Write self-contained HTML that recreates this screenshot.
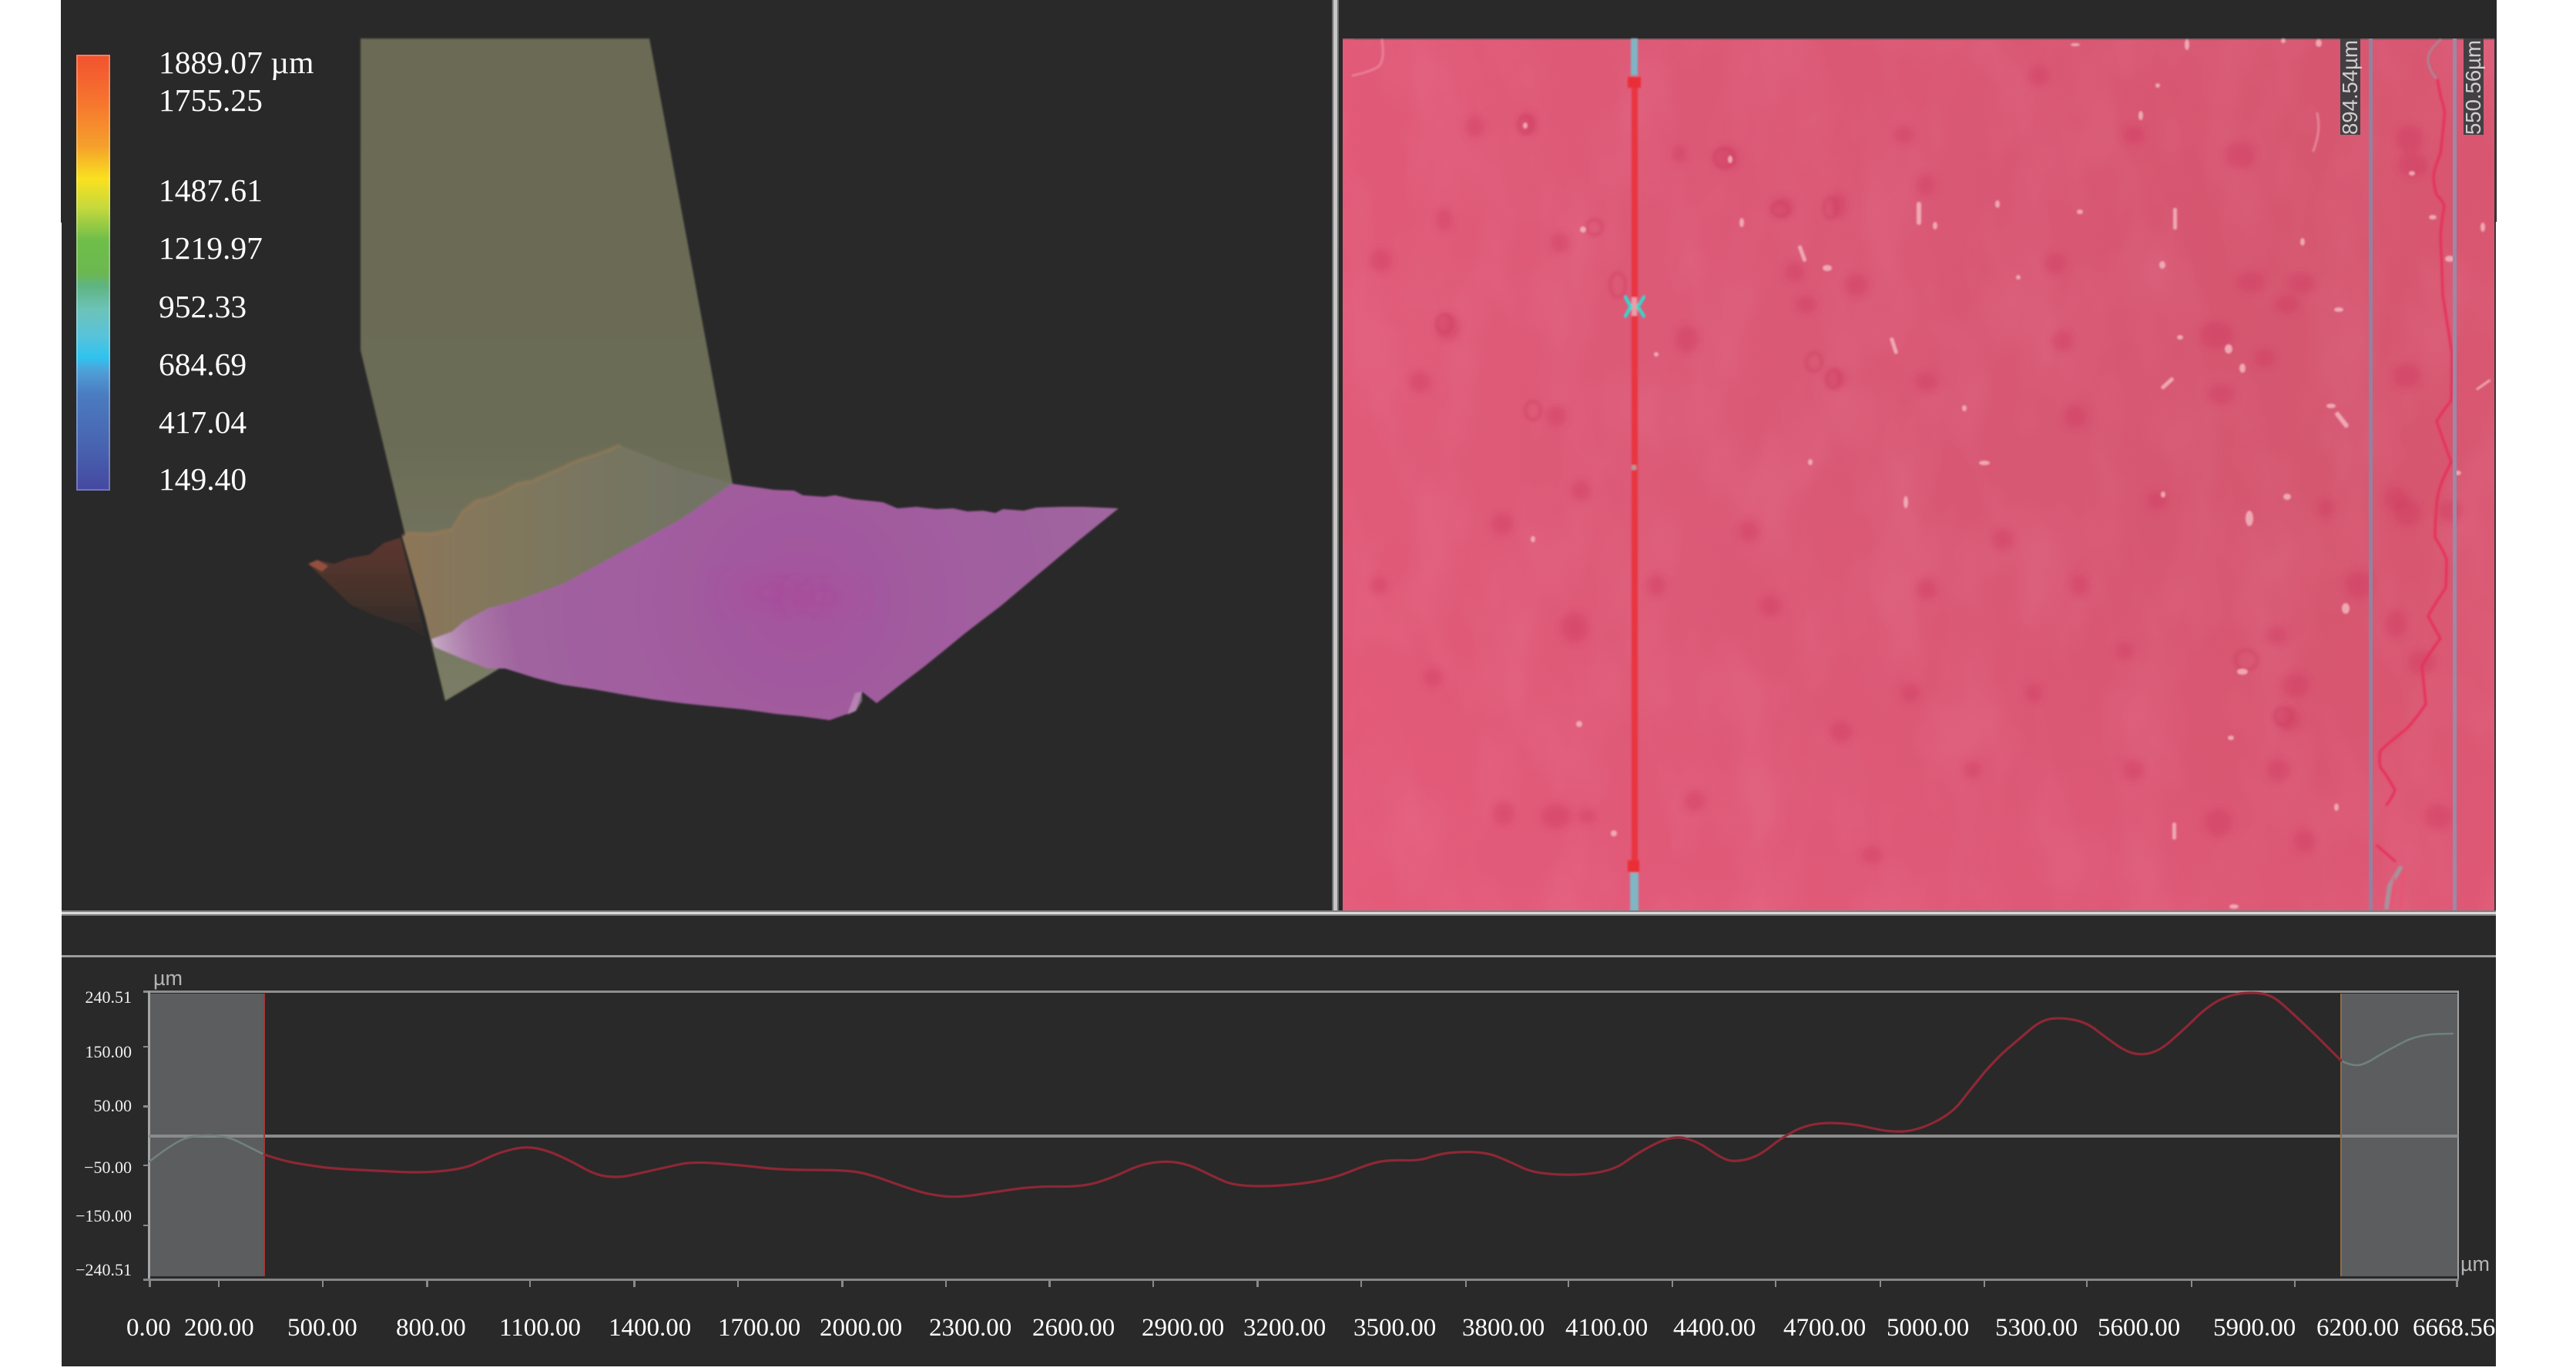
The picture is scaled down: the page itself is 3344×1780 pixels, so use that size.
<!DOCTYPE html>
<html lang="en">
<head>
<meta charset="utf-8">
<title>Surface profile</title>
<style>
html,body{margin:0;padding:0;background:#fff;width:3344px;height:1780px;overflow:hidden}
svg{display:block}
text{font-family:"Liberation Serif",serif;fill:#fff}
.s{font-family:"Liberation Sans",sans-serif}
.leg{font-size:41.5px}
.yl{font-size:22px;text-anchor:end;fill:#f0f0f0}
.xl{font-size:33px}
</style>
</head>
<body>
<svg width="3344" height="1780" viewBox="0 0 3344 1780" xmlns="http://www.w3.org/2000/svg">
<defs>
<linearGradient id="bar" x1="0" y1="0" x2="0" y2="1">
<stop offset="0" stop-color="#f2522f"/><stop offset=".11" stop-color="#f6752f"/><stop offset=".21" stop-color="#f5a02b"/><stop offset=".285" stop-color="#f9e11f"/><stop offset=".35" stop-color="#c6d93c"/><stop offset=".425" stop-color="#6fbe4a"/><stop offset=".5" stop-color="#6cb850"/><stop offset=".53" stop-color="#5fb482"/><stop offset=".585" stop-color="#6cc3b8"/><stop offset=".647" stop-color="#57c3dc"/><stop offset=".694" stop-color="#2fc3ee"/><stop offset=".726" stop-color="#4f9fd8"/><stop offset=".78" stop-color="#4a7cc0"/><stop offset=".9" stop-color="#4863b0"/><stop offset="1" stop-color="#4548a0"/>
</linearGradient>
<linearGradient id="pink" x1="0" y1="0" x2="1" y2="0">
<stop offset="0" stop-color="#e05b78"/><stop offset=".3" stop-color="#db5a76"/><stop offset=".6" stop-color="#d75873"/><stop offset=".85" stop-color="#d4566f"/><stop offset="1" stop-color="#d85771"/>
</linearGradient>
<linearGradient id="pinkv" x1="0" y1="0" x2="0" y2="1">
<stop offset="0" stop-color="#e8506f" stop-opacity=".1"/><stop offset=".5" stop-color="#e8506f" stop-opacity="0"/><stop offset="1" stop-color="#ee5c80" stop-opacity=".32"/>
</linearGradient>
<linearGradient id="plane" x1="0" y1="0" x2="0" y2="1">
<stop offset="0" stop-color="#6b6b55"/><stop offset=".6" stop-color="#6b6c56"/><stop offset="1" stop-color="#7b7d66"/>
</linearGradient>
<linearGradient id="peak" x1="0" y1="0" x2="1" y2="0">
<stop offset="0" stop-color="#8d7659"/><stop offset=".35" stop-color="#7f785d"/><stop offset=".7" stop-color="#757462"/><stop offset="1" stop-color="#727367"/>
</linearGradient>
<linearGradient id="brown" x1="0" y1="0" x2="0" y2="1">
<stop offset="0" stop-color="#5e372e"/><stop offset=".55" stop-color="#46322c"/><stop offset="1" stop-color="#2e2a28"/>
</linearGradient>
<radialGradient id="purple" gradientUnits="userSpaceOnUse" cx="1040" cy="780" r="440">
<stop offset="0" stop-color="#a4559d"/><stop offset=".45" stop-color="#a15d9f"/><stop offset="1" stop-color="#a0679f"/>
</radialGradient>
<linearGradient id="pale" gradientUnits="userSpaceOnUse" x1="565" y1="840" x2="665" y2="822">
<stop offset="0" stop-color="#c4a8c2"/><stop offset=".5" stop-color="#b78cb4" stop-opacity=".45"/><stop offset="1" stop-color="#b78cb4" stop-opacity="0"/>
</linearGradient>
<filter id="b1" x="-5%" y="-5%" width="110%" height="110%"><feGaussianBlur stdDeviation="1"/></filter>
<filter id="b2" x="-5%" y="-5%" width="110%" height="110%"><feGaussianBlur stdDeviation="2"/></filter>
<filter id="b4" x="-5%" y="-5%" width="110%" height="110%"><feGaussianBlur stdDeviation="5"/></filter>
<filter id="b30" x="-30%" y="-30%" width="160%" height="160%"><feGaussianBlur stdDeviation="20"/></filter>
<filter id="cloud" x="0" y="0" width="100%" height="100%">
<feTurbulence type="fractalNoise" baseFrequency="0.012 0.006" numOctaves="3" seed="7"/>
<feColorMatrix values="0 0 0 0 .88  0 0 0 0 .33  0 0 0 0 .46  1.6 0 0 0 -.62"/>
</filter>
<polygon id="surf" points="950.6,628 970,631 985,633 1005,636 1031,637 1042,643 1070,645 1084,643 1107,648 1146,652 1165,660 1190,658 1215,661 1237,660 1256,664 1276,663 1292,666 1302,661 1329,663 1345,659 1378,658 1406,658 1452,660 1400,702 1345,748 1300,786 1253,822 1225,845 1199,866 1170,888 1138,913 1119,898 1111,923 1077,935 1040,930 1008,927 965,921 924,917 885,913 847,908 810,902 771,895 730,889 694,880 672,873 656,868 633,868 600,855 564,840 560,830 587,820 602,807 633,790 671,780 733,757 824,707 886,673"/>
<clipPath id="surfclip"><use href="#surf"/></clipPath>
</defs>

<rect width="3344" height="1780" fill="#fff"/>
<rect x="80" y="0" width="3160" height="1774" fill="#292929"/>
<rect x="79" y="0" width="1" height="289" fill="#292929"/>
<rect x="3240" y="0" width="1" height="288" fill="#292929"/>

<!-- Color scale -->
<rect x="99" y="71" width="44" height="566" fill="url(#bar)"/>
<rect x="100" y="72" width="42" height="564" fill="none" stroke="#fff" stroke-opacity=".25" stroke-width="2"/>
<text class="leg" x="206" y="95">1889.07 µm</text>
<text class="leg" x="206" y="144">1755.25</text>
<text class="leg" x="206" y="261">1487.61</text>
<text class="leg" x="206" y="336">1219.97</text>
<text class="leg" x="206" y="412">952.33</text>
<text class="leg" x="206" y="487">684.69</text>
<text class="leg" x="206" y="562">417.04</text>
<text class="leg" x="206" y="636">149.40</text>

<!-- 3D view -->
<g filter="url(#b1)">
<polygon points="400,732 412,727 434,732 452,725 480,720 498,705 520,698 553,828 526,812 488,800 455,785 426,757" fill="url(#brown)"/>
<polygon points="400,732 412,727 426,735 418,742" fill="#94503f"/>
<polygon points="468,50 843,50 951,628 645,870 578,910 468,455" fill="url(#plane)"/>
<polygon points="522,697 530,692 560,693 587,687 600,665 618,650 633,647 650,640 672,628 690,625 717,613 750,598 775,590 805,578 840,592 880,608 951,628 886,673 824,707 733,757 671,780 633,790 602,807 587,820 560,830" fill="url(#peak)"/>
<polyline points="522,697 530,692 560,693 587,687 600,665 618,650 633,647 650,640 672,628 690,625 717,613 750,598 775,590 805,578" fill="none" stroke="#a07e58" stroke-width="5" stroke-opacity=".4"/>
<use href="#surf" fill="url(#purple)"/>
<use href="#surf" fill="url(#pale)"/>
<g clip-path="url(#surfclip)">
<ellipse cx="1000" cy="770" rx="55" ry="22" fill="#ad3f95" fill-opacity=".38" filter="url(#b30)"/>
<ellipse cx="1070" cy="775" rx="45" ry="20" fill="#ad3f95" fill-opacity=".32" filter="url(#b30)"/>
</g>
<polygon points="1110,900 1119,898 1119,910 1111,923 1100,928" fill="#c9a0c4" fill-opacity=".55"/>
</g>

<!-- Micrograph -->
<rect x="1743" y="50" width="1495" height="1133" fill="url(#pink)"/>
<rect x="1743" y="50" width="1495" height="1133" fill="url(#pinkv)"/>
<rect x="1743" y="50" width="1495" height="1133" filter="url(#cloud)" opacity=".18"/>
<rect x="1743" y="50" width="1495" height="2" fill="#8a6068"/>
<rect x="3238" y="50" width="2" height="1133" fill="#3a3436"/>
<rect x="1743" y="50" width="14" height="1133" fill="#e9587c" fill-opacity=".3"/>

<g filter="url(#b4)" fill="#d03a5e" fill-opacity=".42">
<ellipse cx="2241" cy="205" rx="16" ry="16"/><ellipse cx="1984" cy="160" rx="12" ry="15"/><ellipse cx="2315" cy="269" rx="15" ry="15"/><ellipse cx="2386" cy="267" rx="12" ry="17"/><ellipse cx="2471" cy="175" rx="14" ry="12"/><ellipse cx="2647" cy="98" rx="14" ry="14"/><ellipse cx="2908" cy="201" rx="20" ry="18"/><ellipse cx="2668" cy="342" rx="14" ry="14"/><ellipse cx="2677" cy="443" rx="14" ry="14"/><ellipse cx="2501" cy="496" rx="15" ry="13"/><ellipse cx="2384" cy="492" rx="14" ry="14"/><ellipse cx="2694" cy="541" rx="15" ry="15"/><ellipse cx="2052" cy="637" rx="14" ry="14"/><ellipse cx="2044" cy="815" rx="18" ry="20"/><ellipse cx="2970" cy="934" rx="16" ry="16"/><ellipse cx="2980" cy="890" rx="18" ry="16"/><ellipse cx="2955" cy="825" rx="14" ry="12"/><ellipse cx="3062" cy="759" rx="18" ry="18"/><ellipse cx="3111" cy="648" rx="16" ry="16"/><ellipse cx="3181" cy="663" rx="16" ry="14"/><ellipse cx="3132" cy="214" rx="20" ry="16"/><ellipse cx="3128" cy="180" rx="18" ry="18"/><ellipse cx="2501" cy="765" rx="14" ry="14"/><ellipse cx="2298" cy="787" rx="14" ry="14"/><ellipse cx="2758" cy="845" rx="12" ry="12"/><ellipse cx="1843" cy="496" rx="14" ry="14"/><ellipse cx="1952" cy="1056" rx="14" ry="16"/><ellipse cx="1792" cy="338" rx="15" ry="15"/><ellipse cx="2330" cy="353" rx="13" ry="13"/><ellipse cx="2922" cy="366" rx="18" ry="14"/><ellipse cx="2988" cy="368" rx="18" ry="14"/><ellipse cx="2969" cy="395" rx="16" ry="12"/><ellipse cx="2884" cy="512" rx="18" ry="14"/><ellipse cx="2877" cy="435" rx="22" ry="18"/><ellipse cx="2940" cy="465" rx="14" ry="12"/><ellipse cx="3125" cy="488" rx="18" ry="16"/><ellipse cx="3125" cy="665" rx="18" ry="18"/><ellipse cx="3144" cy="860" rx="18" ry="16"/><ellipse cx="3165" cy="1060" rx="18" ry="16"/><ellipse cx="3110" cy="810" rx="14" ry="18"/><ellipse cx="2958" cy="1000" rx="16" ry="15"/><ellipse cx="2880" cy="1068" rx="18" ry="18"/><ellipse cx="2992" cy="1092" rx="14" ry="14"/><ellipse cx="2025" cy="315" rx="13" ry="14"/><ellipse cx="1875" cy="285" rx="10" ry="16"/><ellipse cx="1915" cy="165" rx="12" ry="14"/><ellipse cx="2500" cy="240" rx="12" ry="15"/><ellipse cx="2345" cy="395" rx="14" ry="12"/><ellipse cx="2410" cy="370" rx="15" ry="15"/><ellipse cx="2190" cy="440" rx="15" ry="18"/><ellipse cx="2020" cy="540" rx="14" ry="14"/><ellipse cx="1880" cy="425" rx="16" ry="18"/><ellipse cx="1950" cy="680" rx="14" ry="14"/><ellipse cx="2270" cy="690" rx="14" ry="14"/><ellipse cx="2600" cy="700" rx="14" ry="14"/><ellipse cx="2700" cy="760" rx="12" ry="14"/><ellipse cx="2390" cy="950" rx="14" ry="14"/><ellipse cx="2560" cy="1000" rx="12" ry="12"/><ellipse cx="2200" cy="1040" rx="14" ry="14"/><ellipse cx="1860" cy="880" rx="12" ry="12"/><ellipse cx="2020" cy="1060" rx="20" ry="16"/><ellipse cx="2060" cy="1060" rx="12" ry="10"/><ellipse cx="2430" cy="1110" rx="14" ry="12"/><ellipse cx="1790" cy="760" rx="12" ry="12"/><ellipse cx="2770" cy="1000" rx="14" ry="14"/><ellipse cx="2640" cy="900" rx="12" ry="12"/><ellipse cx="2480" cy="900" rx="12" ry="12"/><ellipse cx="2150" cy="760" rx="12" ry="14"/><ellipse cx="3020" cy="660" rx="10" ry="12"/><ellipse cx="2800" cy="650" rx="14" ry="12"/><ellipse cx="2180" cy="200" rx="10" ry="12"/><ellipse cx="2770" cy="175" rx="14" ry="12"/>
</g>

<g filter="url(#b2)" fill="none" stroke="#c93a5c" stroke-width="4" stroke-opacity=".45">
<ellipse cx="1980" cy="162" rx="9" ry="11"/><ellipse cx="2238" cy="205" rx="13" ry="12"/><ellipse cx="2311" cy="272" rx="11" ry="9"/><ellipse cx="2376" cy="270" rx="8" ry="13"/><ellipse cx="2070" cy="295" rx="10" ry="10"/><ellipse cx="2355" cy="470" rx="10" ry="12"/><ellipse cx="2380" cy="492" rx="9" ry="12"/><ellipse cx="1990" cy="533" rx="10" ry="12"/><ellipse cx="1875" cy="420" rx="10" ry="12"/><ellipse cx="2916" cy="857" rx="14" ry="13"/><ellipse cx="2964" cy="930" rx="11" ry="11"/><ellipse cx="2100" cy="370" rx="10" ry="16"/>
</g>

<g filter="url(#b1)" fill="#f2b6c0" fill-opacity=".85">
<rect x="2488" y="262" width="6" height="30" rx="3"/><rect x="2456" y="438" width="5" height="22" rx="2" transform="rotate(-18 2458 449)"/><rect x="2337" y="318" width="5" height="22" rx="2" transform="rotate(-20 2340 329)"/>
<ellipse cx="2372" cy="348" rx="6" ry="4"/><ellipse cx="2261" cy="289" rx="3" ry="6"/><ellipse cx="1980" cy="163" rx="3" ry="4"/><ellipse cx="2246" cy="207" rx="3" ry="5"/><ellipse cx="2055" cy="298" rx="4" ry="4"/>
<rect x="2821" y="270" width="5" height="28" rx="2"/><ellipse cx="2807" cy="344" rx="4" ry="5"/><rect x="2804" y="495" width="20" height="5" rx="2" transform="rotate(-42 2814 498)"/><ellipse cx="2911" cy="478" rx="4" ry="6"/><ellipse cx="3026" cy="527" rx="6" ry="3"/><rect x="3028" y="542" width="24" height="6" rx="2" transform="rotate(52 3040 545)"/><ellipse cx="3036" cy="402" rx="6" ry="3"/><ellipse cx="2989" cy="314" rx="3" ry="5"/><ellipse cx="3180" cy="336" rx="6" ry="4"/><ellipse cx="3158" cy="282" rx="5" ry="3"/><ellipse cx="3131" cy="225" rx="4" ry="3"/><ellipse cx="3223" cy="295" rx="3" ry="6"/><rect x="3213" y="498" width="22" height="3" rx="1" transform="rotate(-35 3224 500)"/>
<ellipse cx="2839" cy="58" rx="3" ry="7"/><ellipse cx="3010" cy="56" rx="4" ry="5"/><ellipse cx="2964" cy="53" rx="3" ry="3"/>
<ellipse cx="2920" cy="673" rx="5" ry="10"/><ellipse cx="2969" cy="645" rx="5" ry="4"/><ellipse cx="2911" cy="872" rx="7" ry="4"/><ellipse cx="2896" cy="958" rx="4" ry="3"/><ellipse cx="2808" cy="642" rx="3" ry="4"/><ellipse cx="3045" cy="790" rx="5" ry="7"/>
<rect x="2820" y="1068" width="5" height="22" rx="2"/><ellipse cx="2900" cy="1177" rx="6" ry="3"/><ellipse cx="3033" cy="1048" rx="3" ry="5"/><ellipse cx="3190" cy="614" rx="5" ry="3"/><ellipse cx="2474" cy="652" rx="3" ry="8"/><ellipse cx="2576" cy="601" rx="7" ry="3"/><ellipse cx="2694" cy="58" rx="6" ry="2"/><ellipse cx="2779" cy="150" rx="3" ry="6"/><ellipse cx="2512" cy="293" rx="3" ry="5"/><ellipse cx="2593" cy="265" rx="3" ry="5"/><ellipse cx="2801" cy="111" rx="3" ry="3"/>
<ellipse cx="2893" cy="453" rx="5" ry="6"/><ellipse cx="2830" cy="438" rx="4" ry="3"/><ellipse cx="2050" cy="940" rx="4" ry="4"/><ellipse cx="2095" cy="1082" rx="4" ry="4"/><ellipse cx="2350" cy="600" rx="3" ry="4"/><ellipse cx="2150" cy="460" rx="3" ry="3"/><ellipse cx="2700" cy="275" rx="4" ry="3"/><ellipse cx="2550" cy="530" rx="3" ry="4"/><ellipse cx="2620" cy="360" rx="3" ry="3"/><ellipse cx="1990" cy="700" rx="3" ry="4"/>
</g>

<g fill="none" stroke-linecap="round" stroke-linejoin="round" filter="url(#b1)">
<path d="M1794 52C1797 70 1795 84 1787 88C1775 94 1765 96 1756 98" stroke="#f09aac" stroke-width="3" stroke-opacity=".6"/>
<path d="M3008 147C3012 165 3009 180 3003 196" stroke="#f0a0b2" stroke-width="3" stroke-opacity=".65"/>
<path d="M3168 52C3158 60 3151 70 3152 78C3153 90 3158 97 3164 103" stroke="#a3909e" stroke-width="3" stroke-opacity=".8"/>
<path d="M3164 103Q3166 115 3169 128Q3175 145 3173 153Q3170 185 3168 199Q3159 222 3159 230Q3160 245 3163 253Q3172 262 3173 268Q3169 290 3168 306Q3170 345 3171 383Q3177 420 3183 459Q3183 490 3182 520Q3170 535 3163 547Q3173 575 3182 600Q3178 608 3176 612Q3164 635 3163 657Q3161 680 3161 698Q3172 715 3176 726Q3176 745 3175 763Q3160 785 3152 800Q3160 815 3168 829Q3152 850 3144 865Q3147 895 3149 914Q3135 935 3123 947Q3100 965 3090 975Q3088 985 3090 996Q3102 1012 3109 1026Q3104 1038 3098 1045" stroke="#e6325a" stroke-width="3.2"/>
<path d="M3086 1098L3109 1118" stroke="#e6325a" stroke-width="3"/>
<path d="M3116 1127L3102 1150L3098 1178" stroke="#a8929c" stroke-width="6"/>
<path d="M3108 1140L3104 1180M3120 1135L3116 1180" stroke="#ef4e74" stroke-width="3" stroke-opacity=".7"/>
</g>

<!-- Measurement lines -->
<rect x="3075" y="50" width="5" height="1133" fill="#93829f"/>
<rect x="3184" y="50" width="5" height="1133" fill="#9b8aa5"/>
<g>
<rect x="3038" y="50" width="26" height="125" fill="#443f42"/>
<rect x="3198" y="50" width="26" height="125" fill="#443f42"/>
<text class="s" transform="translate(3060 175) rotate(-90)" font-size="27.5" style="fill:#cfcfcf">894.54µm</text>
<text class="s" transform="translate(3220 175) rotate(-90)" font-size="27.5" style="fill:#cfcfcf">550.56µm</text>
</g>

<g filter="url(#b1)">
<rect x="2118" y="100" width="8" height="1033" fill="#e8363f"/>
<rect x="2117" y="50" width="9" height="48" fill="#7fb5c5"/>
<rect x="2116" y="1133" width="11" height="50" fill="#80b6c4"/>
<rect x="2113" y="100" width="17" height="14" fill="#ea2f38"/>
<rect x="2113" y="1117" width="15" height="15" fill="#ea2f38"/>
<rect x="2118" y="604" width="6" height="6" fill="#b09a9c"/>
<rect x="2118" y="386" width="7" height="24" fill="#ef9aa8"/>
<path d="M2109 384C2114 392 2115 396 2117 398C2115 401 2114 404 2109 412M2135 384C2130 392 2128 396 2126 398C2128 401 2130 404 2135 412" fill="none" stroke="#38d6cc" stroke-width="4.5"/>
</g>

<!-- Dividers -->
<rect x="1729" y="0" width="9" height="1184" fill="#6f6f6f"/>
<rect x="1731" y="0" width="5" height="1184" fill="#c6c6c6"/>
<rect x="80" y="1182" width="3160" height="7" fill="#7d7d7d"/>
<rect x="80" y="1184" width="3160" height="3" fill="#d8d8d8"/>
<rect x="80" y="1240" width="3160" height="3" fill="#9b9b9b"/>

<!-- Profile chart -->
<rect x="193" y="1290" width="150" height="367" fill="#5c5d5e"/>
<rect x="3039" y="1290" width="152" height="367" fill="#5c5d5e"/>
<rect x="186" y="1286" width="3006" height="3" fill="#8e8e8e"/>
<rect x="192" y="1287" width="3" height="375" fill="#a5a5a5"/>
<rect x="3190" y="1287" width="2" height="375" fill="#a0a0a0"/>
<rect x="193" y="1473" width="2998" height="4" fill="#8b8b8b"/>
<rect x="186" y="1660" width="3006" height="3" fill="#858585"/>
<rect x="342" y="1290" width="2" height="367" fill="#a33838"/>
<rect x="3038" y="1290" width="2" height="367" fill="#8f6c48"/>
<g fill="#8a8a8a">
<rect x="186" y="1358" width="7" height="2"/><rect x="186" y="1435" width="7" height="3"/><rect x="186" y="1512" width="7" height="2"/><rect x="186" y="1590" width="7" height="2"/>
<rect x="193" y="1661" width="3" height="10"/><rect x="283" y="1661" width="2" height="10"/><rect x="418" y="1661" width="2" height="10"/><rect x="553" y="1661" width="3" height="10"/><rect x="687" y="1661" width="2" height="10"/><rect x="822" y="1661" width="3" height="10"/><rect x="957" y="1661" width="2" height="10"/><rect x="1092" y="1661" width="3" height="10"/><rect x="1227" y="1661" width="2" height="10"/><rect x="1361" y="1661" width="3" height="10"/><rect x="1496" y="1661" width="2" height="10"/><rect x="1631" y="1661" width="3" height="10"/><rect x="1766" y="1661" width="2" height="10"/><rect x="1902" y="1661" width="2" height="10"/><rect x="2035" y="1661" width="2" height="10"/><rect x="2170" y="1661" width="2" height="10"/><rect x="2304" y="1661" width="2" height="10"/><rect x="2440" y="1661" width="2" height="10"/><rect x="2575" y="1661" width="2" height="10"/><rect x="2708" y="1661" width="2" height="10"/><rect x="2844" y="1661" width="2" height="10"/><rect x="2978" y="1661" width="2" height="10"/><rect x="3188" y="1661" width="3" height="10"/>
</g>

<g fill="none" stroke-linejoin="round" stroke-linecap="round">
<path d="M194 1508Q230 1480 244 1477Q258 1473.6 275 1474Q293 1475 307 1481Q321 1488 343 1499" stroke="#70827e" stroke-width="2.6"/>
<path d="M3039 1377Q3050 1383 3060 1383Q3069 1383 3087 1371Q3106 1360 3124 1351Q3143 1343 3163 1342.5L3184 1342" stroke="#6f827d" stroke-width="2.6"/>
<path stroke="#8e2735" stroke-width="3.2" d="M343 1499Q367 1507 384 1510Q402 1513 416 1515Q430 1517 459 1518.5Q488 1520 519 1521.5Q551 1523 577 1520Q603 1517 614 1512Q625 1507 637 1501.5Q649 1496 666 1492Q683 1488 697 1491Q712 1494 729 1502Q746 1510 760 1518Q775 1526 789 1527.5Q804 1529 818 1526Q832 1523 849 1519Q867 1515 883 1511.5Q900 1508 932 1510.5Q964 1513 989 1516Q1015 1519 1056 1519Q1098 1519 1114 1522Q1130 1525 1152 1533Q1174 1541 1190 1546Q1206 1551 1225 1553Q1244 1555 1269 1551Q1295 1547 1320 1543.5Q1346 1540 1375 1540.5Q1404 1541 1423 1535.5Q1442 1530 1461 1521Q1480 1512 1497 1509.5Q1515 1507 1529 1509.5Q1544 1512 1560 1520Q1576 1528 1590 1534Q1605 1540 1635 1540Q1665 1540 1697 1535.5Q1729 1531 1754 1520.5Q1780 1510 1793 1508Q1806 1506 1825 1506.5Q1844 1507 1856 1502.5Q1869 1498 1884 1496.5Q1900 1495 1916 1496Q1932 1497 1943 1501.5Q1955 1506 1976 1516Q1997 1526 2043 1525Q2089 1524 2109 1509Q2130 1494 2151 1484Q2172 1474 2188 1478Q2204 1482 2218 1492Q2232 1502 2241 1505.5Q2250 1509 2266 1505.5Q2282 1502 2298 1489Q2314 1476 2332 1467Q2351 1458 2376 1458Q2402 1458 2427 1464Q2452 1470 2470 1469Q2489 1468 2512 1456.5Q2535 1445 2547 1428.5Q2560 1412 2575 1393.5Q2591 1375 2605 1362.5Q2620 1350 2635 1337Q2650 1324 2664 1322.5Q2678 1321 2694 1324.5Q2710 1328 2722 1338Q2735 1348 2748 1357Q2761 1366 2772 1368Q2784 1370 2795 1366Q2807 1362 2823 1347Q2840 1332 2853 1319Q2867 1306 2880 1299Q2894 1292 2908 1290Q2922 1288 2936 1290Q2950 1292 2963 1304Q2977 1316 3008 1346L3039 1377"/>
</g>

<text class="s" x="199" y="1279" font-size="27" style="fill:#b4b4b4">µm</text>
<text class="s" x="3194" y="1650" font-size="27" style="fill:#b4b4b4">µm</text>

<text class="yl" x="171" y="1302">240.51</text>
<text class="yl" x="171" y="1373">150.00</text>
<text class="yl" x="171" y="1443">50.00</text>
<text class="yl" x="171" y="1523">−50.00</text>
<text class="yl" x="171" y="1586">−150.00</text>
<text class="yl" x="171" y="1656">−240.51</text>

<text class="xl" x="164" y="1734">0.00</text>
<text class="xl" x="239" y="1734">200.00</text>
<text class="xl" x="373" y="1734">500.00</text>
<text class="xl" x="514" y="1734">800.00</text>
<text class="xl" x="648" y="1734">1100.00</text>
<text class="xl" x="790" y="1734">1400.00</text>
<text class="xl" x="932" y="1734">1700.00</text>
<text class="xl" x="1064" y="1734">2000.00</text>
<text class="xl" x="1206" y="1734">2300.00</text>
<text class="xl" x="1340" y="1734">2600.00</text>
<text class="xl" x="1482" y="1734">2900.00</text>
<text class="xl" x="1614" y="1734">3200.00</text>
<text class="xl" x="1757" y="1734">3500.00</text>
<text class="xl" x="1898" y="1734">3800.00</text>
<text class="xl" x="2032" y="1734">4100.00</text>
<text class="xl" x="2172" y="1734">4400.00</text>
<text class="xl" x="2315" y="1734">4700.00</text>
<text class="xl" x="2449" y="1734">5000.00</text>
<text class="xl" x="2590" y="1734">5300.00</text>
<text class="xl" x="2723" y="1734">5600.00</text>
<text class="xl" x="2873" y="1734">5900.00</text>
<text class="xl" x="3007" y="1734">6200.00</text>
<text class="xl" x="3132" y="1734">6668.56</text>

<rect x="3240" y="288" width="104" height="1492" fill="#fff"/>
</svg>
</body>
</html>
